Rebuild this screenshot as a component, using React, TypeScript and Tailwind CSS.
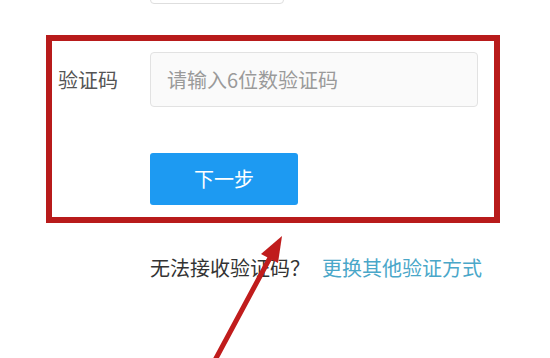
const font = { fontFamily: '"Noto Sans CJK SC", "Noto Sans", sans-serif' };

const PointerArrow = () => (
  <svg
    className="absolute left-0 top-0 pointer-events-none"
    width="550"
    height="358"
    viewBox="0 0 550 358"
  >
    <line x1="214" y1="362" x2="272" y2="254" stroke="#c01c1c" strokeWidth="5" strokeLinecap="round" />
    <polygon points="282,236 278,263 261,254" fill="#c01c1c" />
  </svg>
);

export default function App() {
  return (
    <div className="relative w-[550px] h-[358px] overflow-hidden bg-white" style={font}>
      {/* bottom edge of the previous field */}
      <div className="ml-[150px] mt-[-26px] w-[134px] h-[30px] rounded border border-[#dedede] bg-white" />

      {/* highlighted form block */}
      <div className="ml-[46px] mt-[31px] w-[454px] h-[188px] border-[6px] border-[#b81b1b] bg-white">
        <div className="flex items-center mt-[11px]">
          <span className="w-[98px] pl-[6px] text-[20px] leading-[28px] text-[#555]">验证码</span>
          <div className="w-[328px] h-[55px] rounded-[4px] border border-[#e2e2e2] bg-[#fafafa] flex items-center pl-[16px]">
            <span className="text-[20px] text-[#9a9a9a]">请输入6位数验证码</span>
          </div>
        </div>
        <button className="ml-[98px] mt-[46px] w-[148px] h-[52px] rounded-[3px] bg-[#1d9af2] text-white text-[20px] flex items-center justify-center">
          下一步
        </button>
      </div>

      <div className="ml-[150px] mt-[31px] flex text-[20px] leading-[28px]">
        <span className="text-[#333]">无法接收验证码？</span>
        <span className="ml-[12px] text-[#4aa7c9]">更换其他验证方式</span>
      </div>

      <PointerArrow />
    </div>
  );
}
